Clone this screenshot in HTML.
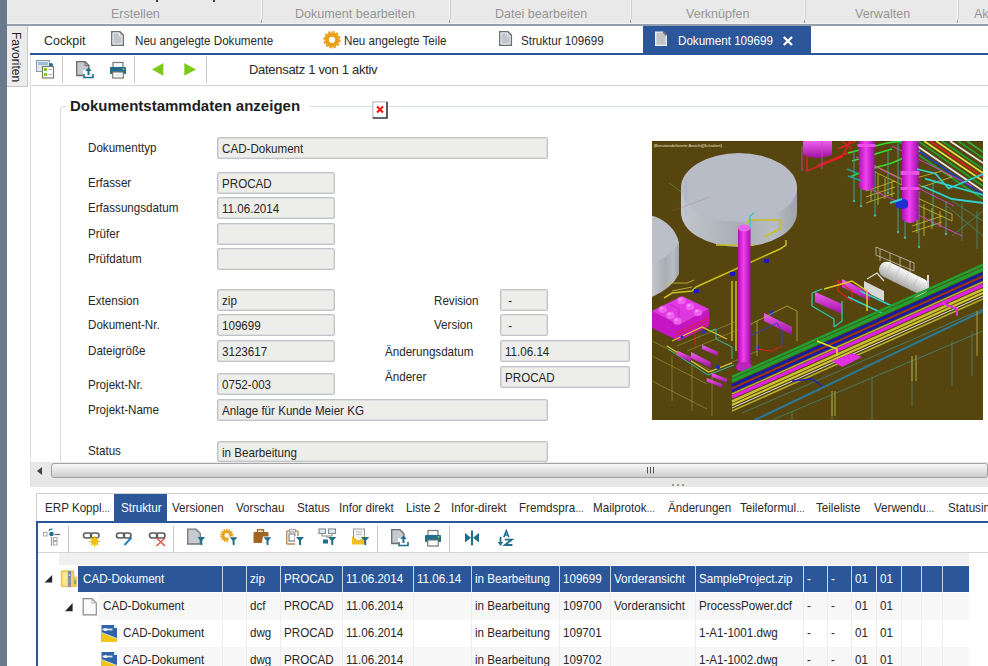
<!DOCTYPE html>
<html><head><meta charset="utf-8">
<style>
*{box-sizing:border-box;margin:0;padding:0}
html,body{width:988px;height:666px;overflow:hidden;background:#fff;font-family:"Liberation Sans",sans-serif;color:#222;position:relative}
.a{position:absolute;white-space:nowrap}
.rib{font-size:13.5px;color:#979593;top:5.6px;transform-origin:0 0;transform:scaleX(.93)}
.rsep{position:absolute;top:0;width:1px;height:19px;background:#cdcdcd;box-shadow:-1px 0 0 #f7f7f7}
.rsep:after{content:"";position:absolute;left:-1px;top:20px;width:1px;height:3px;background:#8fa0c0}
.tab{font-size:13.5px;transform-origin:0 0;transform:scaleX(.86);top:33px;color:#2a2a2a}
.tb{position:absolute;top:0;width:1px;height:27px;background:#c8c8c8}
.lbl{font-size:13.5px;transform-origin:0 0;transform:scaleX(.86);color:#262626;margin-top:-1px}
.fld{position:absolute;height:22px;background:#ededea;border:1px solid #c0c3c8;box-shadow:inset 0 0 0 1px #dcdee0;border-radius:2px;font-size:13.5px;color:#262626;padding:3px 0 0 4px;white-space:nowrap;overflow:hidden}
.btab{font-size:13.5px;transform-origin:0 0;transform:scaleX(.86);top:500px;color:#2a2a2a}
.row{position:absolute;height:26px;font-size:11.5px}
.gt{font-size:13.5px;transform-origin:0 0;transform:scaleX(.86);margin-top:-1px}
.fld span{display:inline-block;transform-origin:0 0;transform:scaleX(.86)}
.cell{position:absolute;top:0;height:26px;padding:6px 0 0 4px;white-space:nowrap;overflow:hidden}
</style></head><body>
<!-- left dark strip -->
<div class="a" style="left:0;top:0;width:7px;height:666px;background:#6b798c"></div>
<!-- ribbon -->
<div class="a" style="left:7px;top:0;width:981px;height:24px;background:#e9e9e9"></div>
<div class="a" style="left:7px;top:23px;width:981px;height:1px;background:#f3f3f3"></div>
<div class="a" style="left:7px;top:24px;width:981px;height:2px;background:#96a0ad"></div>
<div class="a" style="left:156px;top:0;width:2px;height:2px;background:#3a3a55"></div>
<div class="a" style="left:213px;top:0;width:2px;height:2px;background:#3a3a55"></div>
<div class="rsep" style="left:262px"></div>
<div class="rsep" style="left:450px"></div>
<div class="rsep" style="left:631px"></div>
<div class="rsep" style="left:805px"></div>
<div class="rsep" style="left:958px"></div>
<div class="a rib" style="left:111px">Erstellen</div>
<div class="a rib" style="left:295px">Dokument bearbeiten</div>
<div class="a rib" style="left:495px">Datei bearbeiten</div>
<div class="a rib" style="left:686px">Verknüpfen</div>
<div class="a rib" style="left:855px">Verwalten</div>
<div class="a rib" style="left:974px">Ak</div>

<!-- favoriten tab -->
<div class="a" style="left:7px;top:26px;width:21px;height:61px;background:#ececec;border-right:1px solid #c6c6c6;border-bottom:1px solid #c6c6c6"></div>
<div class="a" style="left:9px;top:32px;font-size:13.5px;color:#1e1e1e;transform-origin:0 0;transform:translate(15px,0) rotate(90deg) scale(0.89,1)">Favoriten</div>
<div class="a" style="left:30px;top:55px;width:1px;height:432px;background:#dedede"></div>

<!-- doc tabs -->
<div class="a tab" style="left:44px;transform:scaleX(.92)">Cockpit</div>
<div class="a tab" style="left:135px">Neu angelegte Dokumente</div>
<div class="a tab" style="left:344px">Neu angelegte Teile</div>
<div class="a tab" style="left:521px">Struktur 109699</div>
<div class="a" style="left:643px;top:26px;width:168px;height:28px;background:#2b579a"></div>
<div class="a tab" style="left:678px;color:#fff">Dokument 109699</div>
<svg class="a" style="left:780px;top:33px" width="16" height="16"><path d="M3.8,4 L12,12 M12,4 L3.8,12" stroke="#fff" stroke-width="2.3"/></svg>
<div class="a" style="left:30px;top:53px;width:958px;height:2px;background:#2b579a"></div>

<!-- toolbar -->
<div class="a" style="left:31px;top:85px;width:957px;height:1px;background:#d4d4d4"></div>
<div class="tb" style="left:62px;top:56px"></div>
<div class="tb" style="left:134px;top:56px"></div>
<div class="tb" style="left:206px;top:56px"></div>
<div class="a" style="left:249px;top:62px;font-size:13px;letter-spacing:-0.3px;color:#2a2a2a">Datensatz 1 von 1 aktiv</div>

<!-- group box -->
<div class="a" style="left:60px;top:106px;width:928px;height:356px;border-top:1px solid #d5dde3;border-left:1px solid #d5dde3;border-top-left-radius:4px"></div>
<div class="a" style="left:66px;top:97px;padding:0 4px;background:#fff;font-size:15px;font-weight:bold;color:#1e1e1e">Dokumentstammdaten anzeigen</div>
<div class="a" style="left:300px;top:100px;width:10px;height:12px;background:#fff"></div>

<!-- labels -->
<div class="a lbl" style="left:88px;top:141px">Dokumenttyp</div>
<div class="a lbl" style="left:88px;top:176px">Erfasser</div>
<div class="a lbl" style="left:88px;top:201px">Erfassungsdatum</div>
<div class="a lbl" style="left:88px;top:227px">Prüfer</div>
<div class="a lbl" style="left:88px;top:252px">Prüfdatum</div>
<div class="a lbl" style="left:88px;top:294px">Extension</div>
<div class="a lbl" style="left:88px;top:318px">Dokument-Nr.</div>
<div class="a lbl" style="left:88px;top:344px">Dateigröße</div>
<div class="a lbl" style="left:88px;top:378px">Projekt-Nr.</div>
<div class="a lbl" style="left:88px;top:403px">Projekt-Name</div>
<div class="a lbl" style="left:88px;top:444px">Status</div>
<div class="a lbl" style="left:434px;top:294px">Revision</div>
<div class="a lbl" style="left:434px;top:318px">Version</div>
<div class="a lbl" style="left:385px;top:345px">Änderungsdatum</div>
<div class="a lbl" style="left:385px;top:370px">Änderer</div>

<!-- fields -->
<div class="fld" style="left:217px;top:137px;width:331px"><span>CAD-Dokument</span></div>
<div class="fld" style="left:217px;top:172px;width:118px"><span>PROCAD</span></div>
<div class="fld" style="left:217px;top:197px;width:118px"><span>11.06.2014</span></div>
<div class="fld" style="left:217px;top:223px;width:118px"></div>
<div class="fld" style="left:217px;top:248px;width:118px"></div>
<div class="fld" style="left:217px;top:289px;width:118px"><span>zip</span></div>
<div class="fld" style="left:217px;top:314px;width:118px"><span>109699</span></div>
<div class="fld" style="left:217px;top:340px;width:118px"><span>3123617</span></div>
<div class="fld" style="left:217px;top:373px;width:118px"><span>0752-003</span></div>
<div class="fld" style="left:217px;top:399px;width:331px"><span>Anlage für Kunde Meier KG</span></div>
<div class="fld" style="left:217px;top:441px;width:331px;height:21px"><span>in Bearbeitung</span></div>
<div class="fld" style="left:500px;top:289px;width:48px"><span>&nbsp;-</span></div>
<div class="fld" style="left:500px;top:314px;width:48px"><span>&nbsp;-</span></div>
<div class="fld" style="left:500px;top:340px;width:130px"><span>11.06.14</span></div>
<div class="fld" style="left:500px;top:366px;width:130px"><span>PROCAD</span></div>

<!-- CAD image -->
<div class="a" style="left:652px;top:141px;width:331px;height:279px;background:#57450f;overflow:hidden" id="cad"><svg width="331" height="279" viewBox="0 0 331 279" style="position:absolute;left:0;top:0">
<defs>
<linearGradient id="tside" x1="0" x2="1" y1="0" y2="0"><stop offset="0" stop-color="#c3c6cd"/><stop offset="0.5" stop-color="#a9adb5"/><stop offset="0.8" stop-color="#b8bcc3"/><stop offset="1" stop-color="#9ea2aa"/></linearGradient>
<linearGradient id="col" x1="0" x2="1" y1="0" y2="0"><stop offset="0" stop-color="#b010b0"/><stop offset="0.45" stop-color="#f040f0"/><stop offset="1" stop-color="#a010a8"/></linearGradient>
<linearGradient id="pipeh" x1="0" x2="0" y1="0" y2="1"><stop offset="0" stop-color="#f060f0"/><stop offset="1" stop-color="#a010a0"/></linearGradient>
<linearGradient id="wht" x1="0" x2="0" y1="0" y2="1"><stop offset="0" stop-color="#ffffff"/><stop offset="1" stop-color="#a8a8a8"/></linearGradient>
</defs>
<rect width="331" height="279" fill="#57450f"/>
<rect x="0" y="0" width="331" height="1" fill="#4a3a08"/>
<text x="2" y="5.5" font-family="Liberation Sans" font-size="4" fill="#e8e0c8">[Benutzerdefinierte Ansicht][Schattiert]</text>
<!-- axis -->
<line x1="17" y1="42" x2="50" y2="66" stroke="#5a9a4a" stroke-width="0.6"/>
<line x1="28" y1="62" x2="55" y2="50" stroke="#b06040" stroke-width="0.6"/>
<!-- big tank -->
<path d="M29,46.5 V71.5 A58,34.4 0 0 0 145,71.5 V46.5 Z" fill="url(#tside)"/>
<ellipse cx="87" cy="46.5" rx="58" ry="34.4" fill="#b7bcc6"/>
<line x1="20" y1="70" x2="58" y2="56" stroke="#c07060" stroke-width="0.5" opacity="0.6"/><line x1="34" y1="40" x2="34" y2="75" stroke="#8090d0" stroke-width="0.5" opacity="0.6"/>
<!-- left tank -->
<path d="M0,102 L27,101.6 L27,133 Q20,147 0,156 Z" fill="url(#tside)"/>
<path d="M0,74.6 Q22,82 27,101.6 Q18,116 0,122 Z" fill="#bbbfc8"/>
<!-- yellow pipes left -->
<g fill="none" stroke="#c8c020" stroke-width="1.5">
<path d="M12,157 L20,152 L40,150 L44,146 L128,108 L134,104 L134,99"/>
<path d="M95,83 L97,79 L128,79 L128,88 L112,96"/>
<path d="M64,104 L102,104"/>
<path d="M80,140 L80,200 M84,140 L84,210"/>
</g>
<g fill="#1a1ab8"><rect x="112" y="118" width="5" height="4"/><rect x="78" y="131" width="5" height="4"/><rect x="42" y="148" width="5" height="4"/></g>
<!-- cooler boxes -->
<path d="M0,170 L27,184 L57,168 L57,185 L27,200 L0,187 Z" fill="#c416c4"/>
<path d="M0,170 L30,155 L57,168 L27,184 Z" fill="#e038e0"/>
<path d="M17,163 L27,168 L27,184" fill="none" stroke="#b010b0" stroke-width="0.6"/>
<g fill="#f060f0"><ellipse cx="10.7" cy="168.5" rx="4.2" ry="3.6"/><ellipse cx="18.5" cy="174.4" rx="4.2" ry="3.6"/><ellipse cx="25.4" cy="180.2" rx="4.2" ry="3.6"/><ellipse cx="29.3" cy="159.7" rx="4.2" ry="3.6"/><ellipse cx="38" cy="165.6" rx="4.2" ry="3.6"/><ellipse cx="45.9" cy="171.5" rx="4.2" ry="3.6"/></g>
<g fill="#ff9cff"><circle cx="9.5" cy="167" r="1.3"/><circle cx="17.3" cy="173" r="1.3"/><circle cx="24.2" cy="178.8" r="1.3"/><circle cx="28.1" cy="158.3" r="1.3"/><circle cx="36.8" cy="164.2" r="1.3"/><circle cx="44.7" cy="170" r="1.3"/></g>
<g stroke="#e02020" stroke-width="0.9"><line x1="24" y1="192" x2="58" y2="176"/><line x1="24" y1="195" x2="58" y2="179"/><line x1="26" y1="198" x2="58" y2="182"/><line x1="43" y1="190" x2="43" y2="207"/></g>
<g fill="none" stroke="#d0c040" stroke-width="0.8"><path d="M10,145 L18,142 L35,142 L42,139 M20,150 L40,146"/></g>
<!-- lower left frames -->
<g fill="none" stroke="#a09838" stroke-width="0.6">
<path d="M0,200 L60,230 L60,275 M0,215 L55,243 M20,215 L20,260 M40,225 L40,270 M0,240 L55,268 M25,205 L85,180 M35,210 L95,185 L95,200 M60,230 L110,208"/>
</g>
<g fill="none" stroke="#d8c830" stroke-width="1.2"><path d="M14.6,204.7 L56.6,231 L80,222 M20,200 L50,186 L75,198"/></g>
<g fill="none" stroke="#30c0b0" stroke-width="1"><path d="M16,208 L56,234 L82,224 M58,190 L64,188 L64,198 L80,206 L80,218"/></g>
<g fill="url(#pipeh)">
<path d="M25,209.5 L39,216 L39,221 L25,214.5 Z"/>
<path d="M39,211 L58.6,221 L58.6,227 L39,217 Z"/>
<path d="M50,203.7 L66,211 L66,215.4 L50,208 Z"/>
<path d="M54.7,237 L70.3,243 L70.3,246.7 L54.7,240.7 Z"/>
<path d="M60,232 L75,238 L75,242 L60,236 Z"/>
<path d="M112,172 L140,186 L140,194 L112,180 Z"/>
</g>
<g fill="#2030c0"><circle cx="51.8" cy="191" r="2"/><circle cx="66" cy="226" r="2.2"/><circle cx="30" cy="196" r="1.6"/><rect x="104" y="205" width="4" height="5"/><rect x="118" y="170" width="4" height="4"/></g>
<g fill="none" stroke="#b0b040" stroke-width="0.8"><path d="M95,185 L135,165 L145,170 L145,200 M95,185 L95,220 M105,180 L105,215"/></g>
<g fill="none" stroke="#3040c0" stroke-width="1"><path d="M98,195 L125,182 L130,190 L130,205"/></g>
<g fill="none" stroke="#e02020" stroke-width="1"><path d="M103,208 L120,210 L130,205"/></g>
<!-- magenta column -->
<rect x="86" y="87" width="12.5" height="139" fill="url(#col)"/>
<ellipse cx="92.2" cy="87" rx="6.2" ry="3.5" fill="#f060f0"/>
<path d="M98,87 L98,75 L102,72" fill="none" stroke="#30c0c0" stroke-width="1.3"/>
<ellipse cx="92" cy="226" rx="8" ry="5" fill="#c020c0"/>
<!-- top right area -->
<path d="M151,0 L180,0 L180,14 Q165,20 151,14 Z" fill="url(#pipeh)"/>
<g fill="none" stroke="#e02020" stroke-width="1.5"><path d="M155,14 L155,30 L190,16 L198,0 M165,25 L200,10"/></g>
<g fill="none" stroke="#d040d0" stroke-width="0.8"><path d="M150,5 L150,30 M170,0 L170,28"/></g>
<!-- diagonal pipes top right -->
<g fill="none" stroke-width="1.8">
<path d="M246,0 L331,58" stroke="#20a030"/>
<path d="M252,0 L331,54" stroke="#2040c0"/>
<path d="M258,0 L331,50" stroke="#e8e8e8"/>
<path d="M266,0 L331,45" stroke="#20a030"/>
<path d="M272,0 L331,40" stroke="#e0e040"/>
<path d="M278,0 L331,36" stroke="#e02020"/>
<path d="M284,0 L331,32" stroke="#e0e040"/>
<path d="M290,0 L331,28" stroke="#20a030"/>
<path d="M298,0 L331,22" stroke="#e8e8e8"/>
<path d="M306,0 L331,17" stroke="#20a030"/>
<path d="M315,0 L331,11" stroke="#30b040"/>
</g>
<g fill="none" stroke="#30e030" stroke-width="1.6"><path d="M196,12 L235,2 L250,0 M200,20 L240,8 M198,36 L212,30 L240,22 L268,10"/></g>
<g fill="none" stroke="#e02020" stroke-width="1.4"><path d="M190,0 L200,8 M186,8 L204,0"/></g>
<!-- yellow ladders -->
<g fill="none" stroke="#c8c030" stroke-width="0.8">
<path d="M217,22 L250,38 L250,44 L217,28 Z M219,30 L219,60 M226,33 L226,64 M233,37 L233,58 M240,40 L240,56 M214,50 L243,40 M214,56 L243,46 M214,62 L243,52"/>
<path d="M261,55 L300,73 L300,80 L261,62 Z M265,60 L265,92 M272,63 L272,95 M280,67 L280,88 M288,70 L288,86 M260,85 L290,75 M260,91 L290,81"/>
<path d="M260,38 L290,30 L300,36 L270,46 Z"/>
</g>
<g fill="none" stroke="#d040d0" stroke-width="1"><path d="M204,16 L302,65 M214,46 L244,60 M262,72 L310,95 M240,5 L320,45"/></g>
<!-- teal posts -->
<g stroke="#40a898" stroke-width="0.9">
<line x1="202" y1="10" x2="202" y2="60"/><line x1="209" y1="20" x2="209" y2="65"/><line x1="223" y1="30" x2="223" y2="74.5"/>
<line x1="236" y1="10" x2="236" y2="52"/><line x1="246" y1="0" x2="246" y2="91"/><line x1="253" y1="40" x2="253" y2="96.6"/>
<line x1="267" y1="50" x2="267" y2="106"/><line x1="281" y1="40" x2="281" y2="83.5"/><line x1="294" y1="60" x2="294" y2="93"/>
</g>
<g fill="#40b8a8"><circle cx="202" cy="60" r="1.2"/><circle cx="209" cy="65" r="1.2"/><circle cx="223" cy="74.5" r="1.2"/><circle cx="236" cy="52" r="1.2"/><circle cx="246" cy="91" r="1.2"/><circle cx="253" cy="96.6" r="1.2"/><circle cx="267" cy="106" r="1.2"/><circle cx="281" cy="83.5" r="1.2"/><circle cx="294" cy="93" r="1.2"/></g>
<!-- magenta columns top right -->
<path d="M206.8,0 H222.4 V46 Q214.6,53 206.8,46 Z" fill="url(#col)"/>
<path d="M250,0 H266.5 V78 Q258.2,86 250,78 Z" fill="url(#col)"/>
<g fill="#e850e8"><rect x="205.5" y="3" width="18" height="3"/><rect x="248.5" y="30" width="19" height="4"/><rect x="248.5" y="46" width="19" height="3"/></g>
<path d="M244,60 Q250,55 256,60 L256,66 Q250,70 244,66 Z" fill="#2030d0"/>
<path d="M238,62 L250,58" stroke="#30d0d0" stroke-width="2"/>
<!-- cyan pipes -->
<g fill="none" stroke="#30d0d0" stroke-width="1.8"><path d="M265,28 L283.5,32.7 L296.6,47.5 L331,33 M273,37.6 L331,54 M270,45 L300,58 L331,62"/></g>
<g fill="none" stroke="#2a9a9a" stroke-width="1.6"><path d="M195,28 L205,32 M196,35 L210,40"/></g>
<!-- posts right side -->
<g stroke="#40988a" stroke-width="0.7" fill="none"><path d="M300,60 L331,80 M300,95 L331,70 M310,62 L310,100 M325,70 L325,108 M295,65 L331,95"/></g>
<!-- white equipment -->
<g fill="none" stroke="#d0d0d0" stroke-width="0.7"><path d="M224,106 L262,122 L262,130 L224,114 Z M228,108 L228,120 M238,112 L238,124 M248,116 L248,128 M258,120 L258,132"/></g>
<g transform="translate(252,137) rotate(26)"><rect x="-27" y="-8" width="54" height="16" rx="8" fill="url(#wht)"/><g stroke="#bbb" stroke-width="0.6"><line x1="-18" y1="-8" x2="-18" y2="8"/><line x1="-8" y1="-8" x2="-8" y2="8"/><line x1="2" y1="-8" x2="2" y2="8"/><line x1="12" y1="-8" x2="12" y2="8"/></g></g>
<path d="M212,140 L232,150 L232,160 L212,150 Z" fill="#d8d8d8"/>
<path d="M215,138 L225,132 L232,140" fill="none" stroke="#e0e0e0" stroke-width="1.2"/>
<path d="M262,158 L276,148 L276,134" fill="none" stroke="#d8d8d8" stroke-width="2"/>
<!-- red/magenta vessel near equip -->
<path d="M190,138 L218,152 L218,160 L190,146 Z" fill="url(#pipeh)"/>
<g fill="none" stroke="#e02020" stroke-width="1.2"><path d="M186,140 L186,150 L200,160 L200,150 Z"/></g>
<g fill="none" stroke="#30d0d0" stroke-width="1.5"><path d="M196,156 L230,172 M208,150 L240,165"/></g>
<g fill="none" stroke="#e0c820" stroke-width="1.5"><path d="M172,148 L200,140 L215,150 L215,170"/></g>
<!-- vessel left of center -->
<path d="M163,151 L190,163 L190,173 L163,161 Z" fill="url(#pipeh)"/>
<g fill="none" stroke="#30c8b0" stroke-width="1.3"><path d="M160,152 L160,165 L182,178 L182,186 M190,160 L190,180 L182,186 M160,152 L170,148"/></g>
<!-- pipe rack -->
<g fill="none" stroke-linecap="butt">
<path d="M80,236 L331,124" stroke="#20a030" stroke-width="2.5"/>
<path d="M80,240 L331,128" stroke="#20a030" stroke-width="3.5"/>
<path d="M80,244.5 L331,132.5" stroke="#1818b0" stroke-width="2.5"/>
<path d="M80,247.5 L331,135.5" stroke="#e02020" stroke-width="1"/>
<path d="M80,250 L331,138" stroke="#1818b0" stroke-width="2.5"/>
<path d="M80,253 L331,141" stroke="#b0b030" stroke-width="1.5"/>
<path d="M80,256 L331,144" stroke="#e020e0" stroke-width="3.5"/>
<path d="M80,260.5 L331,148.5" stroke="#c8c030" stroke-width="2.5"/>
<path d="M80,264 L331,152" stroke="#d0c838" stroke-width="2"/>
<path d="M80,267 L331,155" stroke="#e0e0e0" stroke-width="1"/>
<path d="M80,270 L331,158" stroke="#b8b030" stroke-width="1.5"/>
</g>
<!-- lower railing -->
<g fill="none" stroke="#2a7a9a" stroke-width="2"><path d="M80,290 L331,170"/></g>
<g fill="none" stroke="#40908a" stroke-width="0.7"><path d="M90,272 L331,168 M120,279 L331,190 M140,270 L140,279 M180,255 L180,279 M220,236 L220,279 M260,218 L260,265 M300,200 L300,245 M320,190 L320,235"/></g>
<g fill="none" stroke="#b0a838" stroke-width="1"><path d="M180,250 L180,275 M183,250 L183,275 M260,215 L260,240 M264,214 L264,240 M325,170 L325,215"/></g>
<path d="M180,220 L200,212 L210,216 L190,226 Z" fill="#e030e0"/>
<path d="M290,162 L305,168 L305,175" fill="none" stroke="#e030e0" stroke-width="2"/>
<path d="M140,240 L160,238 L170,245" fill="none" stroke="#2020c0" stroke-width="1.5"/>
<path d="M165,200 L185,208 L185,215" fill="none" stroke="#e0e030" stroke-width="1.5"/>
</svg>
</div>

<!-- h scrollbar -->
<div class="a" style="left:31px;top:462px;width:957px;height:16px;background:#e8e8e8"></div>
<div class="a" style="left:51px;top:463px;width:937px;height:15px;border:1px solid #a3a3a3;border-radius:3px;background:linear-gradient(#f6f6f6,#e6e6e6 45%,#cdcdcd)"></div>
<div class="a" style="left:37px;top:467px;width:0;height:0;border-top:4px solid transparent;border-bottom:4px solid transparent;border-right:5px solid #444"></div>
<div class="a" style="left:31px;top:478px;width:957px;height:9px;background:#e6e6e6"></div>

<!-- bottom panel -->
<div class="a" style="left:36px;top:493px;width:952px;height:1px;background:#d0d0d0"></div>
<div class="a" style="left:36px;top:493px;width:1px;height:30px;background:#d0d0d0"></div>
<div class="a" style="left:114px;top:494px;width:53px;height:28px;background:#2b579a"></div>
<div class="a btab" style="left:45px">ERP Koppl<span style="font-size:10px;letter-spacing:-0.6px">…</span></div>
<div class="a btab" style="left:121px;color:#fff">Struktur</div>
<div class="a btab" style="left:172px">Versionen</div>
<div class="a btab" style="left:236px">Vorschau</div>
<div class="a btab" style="left:297px">Status</div>
<div class="a btab" style="left:339px">Infor direkt</div>
<div class="a btab" style="left:406px">Liste 2</div>
<div class="a btab" style="left:451px">Infor-direkt</div>
<div class="a btab" style="left:519px">Fremdspra<span style="font-size:10px;letter-spacing:-0.6px">…</span></div>
<div class="a btab" style="left:593px">Mailprotok<span style="font-size:10px;letter-spacing:-0.6px">…</span></div>
<div class="a btab" style="left:668px">Änderungen</div>
<div class="a btab" style="left:740px">Teileformul<span style="font-size:10px;letter-spacing:-0.6px">…</span></div>
<div class="a btab" style="left:816px">Teileliste</div>
<div class="a btab" style="left:874px">Verwendu<span style="font-size:10px;letter-spacing:-0.6px">…</span></div>
<div class="a btab" style="left:948px">Statusinfo</div>
<div class="a" style="left:36px;top:521px;width:952px;height:2px;background:#2b579a"></div>
<div class="a" style="left:36px;top:521px;width:2px;height:145px;background:#2b579a"></div>

<!-- toolbar 2 -->
<div class="a" style="left:38px;top:552px;width:950px;height:1px;background:#d4d4d4"></div>
<div class="tb" style="left:68px;top:526px"></div>
<div class="tb" style="left:173px;top:526px"></div>
<div class="tb" style="left:377px;top:526px"></div>
<div class="tb" style="left:449px;top:526px"></div>

<!-- grid -->
<div class="a" style="left:59px;top:553px;width:910px;height:12px;background:#f0f0f0"></div>
<div id="grid">
<div class="a" style="left:78px;top:566px;width:891px;height:26px;background:#2b579a"></div>
<div class="a" style="left:222px;top:566px;width:1px;height:26px;background:#c9d5e8"></div>
<div class="a" style="left:246px;top:566px;width:1px;height:26px;background:#c9d5e8"></div>
<div class="a" style="left:280px;top:566px;width:1px;height:26px;background:#c9d5e8"></div>
<div class="a" style="left:342px;top:566px;width:1px;height:26px;background:#c9d5e8"></div>
<div class="a" style="left:413px;top:566px;width:1px;height:26px;background:#c9d5e8"></div>
<div class="a" style="left:471px;top:566px;width:1px;height:26px;background:#c9d5e8"></div>
<div class="a" style="left:559px;top:566px;width:1px;height:26px;background:#c9d5e8"></div>
<div class="a" style="left:610px;top:566px;width:1px;height:26px;background:#c9d5e8"></div>
<div class="a" style="left:695px;top:566px;width:1px;height:26px;background:#c9d5e8"></div>
<div class="a" style="left:803px;top:566px;width:1px;height:26px;background:#c9d5e8"></div>
<div class="a" style="left:827px;top:566px;width:1px;height:26px;background:#c9d5e8"></div>
<div class="a" style="left:851px;top:566px;width:1px;height:26px;background:#c9d5e8"></div>
<div class="a" style="left:876px;top:566px;width:1px;height:26px;background:#c9d5e8"></div>
<div class="a" style="left:901px;top:566px;width:1px;height:26px;background:#c9d5e8"></div>
<div class="a" style="left:921px;top:566px;width:1px;height:26px;background:#c9d5e8"></div>
<div class="a" style="left:942px;top:566px;width:1px;height:26px;background:#c9d5e8"></div>
<div class="a gt" style="left:83px;top:572px;color:#fff">CAD-Dokument</div>
<div class="a gt" style="left:250px;top:572px;color:#fff">zip</div>
<div class="a gt" style="left:284px;top:572px;color:#fff">PROCAD</div>
<div class="a gt" style="left:346px;top:572px;color:#fff">11.06.2014</div>
<div class="a gt" style="left:417px;top:572px;color:#fff">11.06.14</div>
<div class="a gt" style="left:475px;top:572px;color:#fff">in Bearbeitung</div>
<div class="a gt" style="left:563px;top:572px;color:#fff">109699</div>
<div class="a gt" style="left:614px;top:572px;color:#fff">Vorderansicht</div>
<div class="a gt" style="left:699px;top:572px;color:#fff">SampleProject.zip</div>
<div class="a gt" style="left:807px;top:572px;color:#fff">-</div>
<div class="a gt" style="left:831px;top:572px;color:#fff">-</div>
<div class="a gt" style="left:855px;top:572px;color:#fff">01</div>
<div class="a gt" style="left:880px;top:572px;color:#fff">01</div>
<div class="a" style="left:98px;top:593px;width:871px;height:27px;background:#f7f7f7"></div>
<div class="a" style="left:222px;top:593px;width:1px;height:27px;background:#ededed"></div>
<div class="a" style="left:246px;top:593px;width:1px;height:27px;background:#ededed"></div>
<div class="a" style="left:280px;top:593px;width:1px;height:27px;background:#ededed"></div>
<div class="a" style="left:342px;top:593px;width:1px;height:27px;background:#ededed"></div>
<div class="a" style="left:413px;top:593px;width:1px;height:27px;background:#ededed"></div>
<div class="a" style="left:471px;top:593px;width:1px;height:27px;background:#ededed"></div>
<div class="a" style="left:559px;top:593px;width:1px;height:27px;background:#ededed"></div>
<div class="a" style="left:610px;top:593px;width:1px;height:27px;background:#ededed"></div>
<div class="a" style="left:695px;top:593px;width:1px;height:27px;background:#ededed"></div>
<div class="a" style="left:803px;top:593px;width:1px;height:27px;background:#ededed"></div>
<div class="a" style="left:827px;top:593px;width:1px;height:27px;background:#ededed"></div>
<div class="a" style="left:851px;top:593px;width:1px;height:27px;background:#ededed"></div>
<div class="a" style="left:876px;top:593px;width:1px;height:27px;background:#ededed"></div>
<div class="a" style="left:901px;top:593px;width:1px;height:27px;background:#ededed"></div>
<div class="a" style="left:921px;top:593px;width:1px;height:27px;background:#ededed"></div>
<div class="a" style="left:942px;top:593px;width:1px;height:27px;background:#ededed"></div>
<div class="a gt" style="left:103px;top:599px;color:#262626">CAD-Dokument</div>
<div class="a gt" style="left:250px;top:599px;color:#262626">dcf</div>
<div class="a gt" style="left:284px;top:599px;color:#262626">PROCAD</div>
<div class="a gt" style="left:346px;top:599px;color:#262626">11.06.2014</div>
<div class="a gt" style="left:475px;top:599px;color:#262626">in Bearbeitung</div>
<div class="a gt" style="left:563px;top:599px;color:#262626">109700</div>
<div class="a gt" style="left:614px;top:599px;color:#262626">Vorderansicht</div>
<div class="a gt" style="left:699px;top:599px;color:#262626">ProcessPower.dcf</div>
<div class="a gt" style="left:807px;top:599px;color:#262626">-</div>
<div class="a gt" style="left:831px;top:599px;color:#262626">-</div>
<div class="a gt" style="left:855px;top:599px;color:#262626">01</div>
<div class="a gt" style="left:880px;top:599px;color:#262626">01</div>
<div class="a" style="left:222px;top:620px;width:1px;height:27px;background:#ededed"></div>
<div class="a" style="left:246px;top:620px;width:1px;height:27px;background:#ededed"></div>
<div class="a" style="left:280px;top:620px;width:1px;height:27px;background:#ededed"></div>
<div class="a" style="left:342px;top:620px;width:1px;height:27px;background:#ededed"></div>
<div class="a" style="left:413px;top:620px;width:1px;height:27px;background:#ededed"></div>
<div class="a" style="left:471px;top:620px;width:1px;height:27px;background:#ededed"></div>
<div class="a" style="left:559px;top:620px;width:1px;height:27px;background:#ededed"></div>
<div class="a" style="left:610px;top:620px;width:1px;height:27px;background:#ededed"></div>
<div class="a" style="left:695px;top:620px;width:1px;height:27px;background:#ededed"></div>
<div class="a" style="left:803px;top:620px;width:1px;height:27px;background:#ededed"></div>
<div class="a" style="left:827px;top:620px;width:1px;height:27px;background:#ededed"></div>
<div class="a" style="left:851px;top:620px;width:1px;height:27px;background:#ededed"></div>
<div class="a" style="left:876px;top:620px;width:1px;height:27px;background:#ededed"></div>
<div class="a" style="left:901px;top:620px;width:1px;height:27px;background:#ededed"></div>
<div class="a" style="left:921px;top:620px;width:1px;height:27px;background:#ededed"></div>
<div class="a" style="left:942px;top:620px;width:1px;height:27px;background:#ededed"></div>
<div class="a gt" style="left:123px;top:626px;color:#262626">CAD-Dokument</div>
<div class="a gt" style="left:250px;top:626px;color:#262626">dwg</div>
<div class="a gt" style="left:284px;top:626px;color:#262626">PROCAD</div>
<div class="a gt" style="left:346px;top:626px;color:#262626">11.06.2014</div>
<div class="a gt" style="left:475px;top:626px;color:#262626">in Bearbeitung</div>
<div class="a gt" style="left:563px;top:626px;color:#262626">109701</div>
<div class="a gt" style="left:699px;top:626px;color:#262626">1-A1-1001.dwg</div>
<div class="a gt" style="left:807px;top:626px;color:#262626">-</div>
<div class="a gt" style="left:831px;top:626px;color:#262626">-</div>
<div class="a gt" style="left:855px;top:626px;color:#262626">01</div>
<div class="a gt" style="left:880px;top:626px;color:#262626">01</div>
<div class="a" style="left:118px;top:647px;width:851px;height:27px;background:#f7f7f7"></div>
<div class="a" style="left:222px;top:647px;width:1px;height:27px;background:#ededed"></div>
<div class="a" style="left:246px;top:647px;width:1px;height:27px;background:#ededed"></div>
<div class="a" style="left:280px;top:647px;width:1px;height:27px;background:#ededed"></div>
<div class="a" style="left:342px;top:647px;width:1px;height:27px;background:#ededed"></div>
<div class="a" style="left:413px;top:647px;width:1px;height:27px;background:#ededed"></div>
<div class="a" style="left:471px;top:647px;width:1px;height:27px;background:#ededed"></div>
<div class="a" style="left:559px;top:647px;width:1px;height:27px;background:#ededed"></div>
<div class="a" style="left:610px;top:647px;width:1px;height:27px;background:#ededed"></div>
<div class="a" style="left:695px;top:647px;width:1px;height:27px;background:#ededed"></div>
<div class="a" style="left:803px;top:647px;width:1px;height:27px;background:#ededed"></div>
<div class="a" style="left:827px;top:647px;width:1px;height:27px;background:#ededed"></div>
<div class="a" style="left:851px;top:647px;width:1px;height:27px;background:#ededed"></div>
<div class="a" style="left:876px;top:647px;width:1px;height:27px;background:#ededed"></div>
<div class="a" style="left:901px;top:647px;width:1px;height:27px;background:#ededed"></div>
<div class="a" style="left:921px;top:647px;width:1px;height:27px;background:#ededed"></div>
<div class="a" style="left:942px;top:647px;width:1px;height:27px;background:#ededed"></div>
<div class="a gt" style="left:123px;top:653px;color:#262626">CAD-Dokument</div>
<div class="a gt" style="left:250px;top:653px;color:#262626">dwg</div>
<div class="a gt" style="left:284px;top:653px;color:#262626">PROCAD</div>
<div class="a gt" style="left:346px;top:653px;color:#262626">11.06.2014</div>
<div class="a gt" style="left:475px;top:653px;color:#262626">in Bearbeitung</div>
<div class="a gt" style="left:563px;top:653px;color:#262626">109702</div>
<div class="a gt" style="left:699px;top:653px;color:#262626">1-A1-1002.dwg</div>
<div class="a gt" style="left:807px;top:653px;color:#262626">-</div>
<div class="a gt" style="left:831px;top:653px;color:#262626">-</div>
<div class="a gt" style="left:855px;top:653px;color:#262626">01</div>
<div class="a gt" style="left:880px;top:653px;color:#262626">01</div>

</div>
<!-- ICONS -->
<svg class="a" style="left:0;top:0" width="988" height="666" viewBox="0 0 988 666">
<!-- toolbar1: form icon -->
<rect x="36.5" y="60.5" width="13" height="11" fill="#dfe8f0" stroke="#8a9aa8"/>
<rect x="38" y="62" width="10" height="3" fill="#9bbfd8"/>
<circle cx="51" cy="65" r="2" fill="#1f6e8c"/>
<rect x="42.5" y="66.5" width="11" height="11.5" fill="#fff" stroke="#7a7a7a" stroke-width="1.2"/>
<rect x="44" y="68" width="3" height="3" fill="#7dc919"/>
<rect x="44" y="73" width="3" height="3" fill="#7dc919"/>
<line x1="48.5" y1="69.5" x2="52" y2="69.5" stroke="#aaa"/>
<line x1="48.5" y1="74.5" x2="52" y2="74.5" stroke="#aaa"/>
<!-- doc upload -->
<path d="M76.7,61.6 H85 L89,65.6 V75.5 H76.7 Z" fill="#c5cbd0" stroke="#6a6a6a" stroke-width="1.3"/>
<path d="M85,61.6 V65.6 H89" fill="none" stroke="#6a6a6a" stroke-width="1"/>
<rect x="83" y="70" width="11" height="8.5" fill="#fff"/>
<path d="M88.5,67.5 L85.3,71 H87.5 V75 H89.5 V71 H91.7 Z" fill="#1f6e8c"/>
<path d="M84,74 V77.5 H93 V74" fill="none" stroke="#1f6e8c" stroke-width="1.6"/>
<!-- printer -->
<rect x="113" y="62.5" width="10" height="5" fill="#fff" stroke="#777" stroke-width="1.2"/>
<rect x="110" y="67" width="16" height="7" rx="1" fill="#1f6e8c"/>
<circle cx="123.5" cy="69" r="0.9" fill="#9fd05a"/>
<rect x="112.7" y="72" width="10.6" height="6" fill="#fff" stroke="#777" stroke-width="1.2"/>
<line x1="114.5" y1="75" x2="121.5" y2="75" stroke="#ccc" stroke-width="0.8"/>
<!-- green arrows -->
<path d="M152,69.4 L163.4,63.1 V75.7 Z" fill="#7dc919"/>
<path d="M196,69.4 L184.3,63.1 V75.7 Z" fill="#7dc919"/>
<!-- tab doc icons -->
<path d="M111.7,31.7 H120 L123.4,35 V45.3 H111.7 Z" fill="#c0c6cb" stroke="#6e6e6e" stroke-width="1.3"/>
<path d="M113,33 H119.5 V36 H122 V44 H113 Z" fill="none" stroke="#e8ecef" stroke-width="1"/>
<path d="M499.7,31.7 H508 L511.4,35 V45.3 H499.7 Z" fill="#c0c6cb" stroke="#6e6e6e" stroke-width="1.3"/>
<path d="M501,33 H507.5 V36 H510 V44 H501 Z" fill="none" stroke="#e8ecef" stroke-width="1"/>
<path d="M655.7,32.2 H663 L666.3,35.5 V45.3 H655.7 Z" fill="#bfc4c9" stroke="#f2f2f2" stroke-width="1.3"/>
<path d="M663,32.2 L666.3,35.5" fill="none" stroke="#7a6a5a" stroke-width="1.3"/>
<!-- gear -->
<g transform="translate(332,39.8)">
<circle r="7.4" fill="#e8a11b"/>
<circle r="8" fill="none" stroke="#e8a11b" stroke-width="1.5" stroke-dasharray="2.5 1.69"/>
<circle r="3.1" fill="#fff"/>
</g>
<!-- red x box -->
<rect x="372.5" y="101.5" width="15" height="17" fill="#fff"/>
<path d="M372.8,118 V101.8 H387" fill="none" stroke="#c2c2d0" stroke-width="1.3"/>
<path d="M387,101.8 V118 H372.8" fill="none" stroke="#333" stroke-width="1.6"/>
<path d="M377,106.5 L383,112.5 M383,106.5 L377,112.5" stroke="#ff1010" stroke-width="2"/>
</svg>

<svg class="a" style="left:0;top:0" width="988" height="666" viewBox="0 0 988 666">
<!-- tree icon -->
<rect x="43.5" y="532.5" width="3.5" height="3.5" fill="none" stroke="#aaa"/>
<path d="M49,531 Q50,528.5 52.5,529.5" fill="none" stroke="#1f6e8c" stroke-width="1.2"/>
<circle cx="51.5" cy="534" r="2.3" fill="#1f6e8c"/>
<line x1="54.5" y1="534.5" x2="60" y2="534.5" stroke="#666" stroke-width="1.2"/>
<line x1="51.5" y1="537" x2="51.5" y2="546" stroke="#999" stroke-width="1.3"/>
<rect x="53.5" y="537.5" width="3.5" height="3" fill="none" stroke="#aaa"/>
<rect x="53.5" y="541.5" width="3.5" height="3.5" fill="none" stroke="#aaa"/>
<!-- link sun -->
<g fill="none" stroke="#5a5a5a" stroke-width="1.5">
<rect x="83.5" y="533" width="8" height="5" rx="2.5"/><rect x="90.5" y="533" width="8.5" height="5" rx="2.5"/>
<rect x="116.5" y="533" width="8" height="5" rx="2.5"/><rect x="123.5" y="533" width="7.5" height="5" rx="2.5"/>
<rect x="149.5" y="533" width="8" height="5" rx="2.5"/><rect x="156.5" y="533" width="8.5" height="5" rx="2.5"/>
</g>
<circle cx="94.6" cy="541.5" r="3.6" fill="#f2c012"/>
<g stroke="#f2c012" stroke-width="1.2"><line x1="94.6" y1="536" x2="94.6" y2="547"/><line x1="89" y1="541.5" x2="100" y2="541.5"/><line x1="90.8" y1="537.7" x2="98.4" y2="545.3"/><line x1="98.4" y1="537.7" x2="90.8" y2="545.3"/></g>
<line x1="124.5" y1="545" x2="131.5" y2="537.5" stroke="#2a7fb5" stroke-width="2"/>
<path d="M156.5,538 L165,546 M165,538 L156.5,546" stroke="#e05a48" stroke-width="1.6"/>
<!-- doc filter -->
<path d="M187.7,529.2 H196 L200.3,533.5 V544 H187.7 Z" fill="#c5cbd0" stroke="#777" stroke-width="1.3"/>
<path d="M197.5,537 H205 L202.3,540.5 V545.5 L200.3,544.5 V540.5 Z" fill="#1f6e8c"/>
<!-- gear filter -->
<g transform="translate(226.8,535.4)">
<circle r="5.4" fill="#e8a11b"/>
<circle r="6" fill="none" stroke="#e8a11b" stroke-width="1.6" stroke-dasharray="1.5 1.19"/>
<circle r="2.4" fill="#fff"/>
</g>
<path d="M228.5,536.5 L239,536.5 L236,547 L228.5,547 Z" fill="#fff"/>
<path d="M229.6,537.2 H237.4 L234.6,540.6 V545.4 L232.6,544.6 V540.6 Z" fill="#1f6e8c"/>
<!-- briefcase filter -->
<rect x="257.5" y="529.8" width="6" height="3" fill="none" stroke="#a0641e" stroke-width="1.4"/>
<rect x="253.5" y="532" width="15" height="11" rx="1" fill="#a0641e"/>
<path d="M263,536.5 L272,536.5 L270,547 L261,547 Z" fill="#fff"/>
<path d="M263.5,537.2 H271.3 L268.5,540.6 V545.4 L266.5,544.6 V540.6 Z" fill="#1f6e8c"/>
<!-- clipboard filter -->
<rect x="286.7" y="531" width="11.3" height="13" rx="1" fill="#fff" stroke="#b08d5a" stroke-width="1.4"/>
<rect x="289.5" y="529.2" width="6" height="3" fill="#ddd" stroke="#999" stroke-width="0.8"/>
<rect x="289" y="534" width="6" height="7" fill="none" stroke="#777" stroke-width="1.1"/>
<rect x="295" y="536" width="10" height="10" fill="#fff"/>
<path d="M296,537 H304 L301,540.5 V545.5 L299,544.5 V540.5 Z" fill="#1f6e8c"/>
<!-- hierarchy filter -->
<rect x="319" y="529" width="6.5" height="4.5" fill="#d9ecf5" stroke="#888" stroke-width="1.1"/>
<rect x="328.5" y="529" width="7" height="4.5" fill="#d9ecf5" stroke="#888" stroke-width="1.1"/>
<path d="M322,533.5 V536 H332 V533.5 M327,536 V538" fill="none" stroke="#888" stroke-width="1"/>
<rect x="323" y="539.5" width="5" height="4" fill="#1f6e8c"/>
<path d="M328,537 H336.3 L333.2,540.5 V545.5 L331.2,544.5 V540.5 Z" fill="#1f6e8c"/>
<!-- letter filter -->
<rect x="353.5" y="529" width="11" height="12" fill="#f3f3f3" stroke="#999" stroke-width="1"/>
<line x1="356" y1="532" x2="362" y2="532" stroke="#bbb"/><line x1="356" y1="534.5" x2="362" y2="534.5" stroke="#bbb"/>
<path d="M352,536 L358.5,541 L365,536 V544.5 H352 Z" fill="#f0c020"/>
<path d="M361,537 H369.2 L366.2,540.5 V545.5 L364.2,544.5 V540.5 Z" fill="#1f6e8c"/>
<!-- doc upload 2 -->
<path d="M391.7,529.7 H400 L404,533.7 V543.5 H391.7 Z" fill="#c5cbd0" stroke="#6a6a6a" stroke-width="1.3"/>
<rect x="398" y="538" width="11" height="9" fill="#fff"/>
<path d="M403.5,535.5 L400.3,539 H402.5 V543 H404.5 V539 H406.7 Z" fill="#1f6e8c"/>
<path d="M399,542 V545.5 H408 V542" fill="none" stroke="#1f6e8c" stroke-width="1.6"/>
<!-- printer 2 -->
<rect x="428" y="530.5" width="10" height="5" fill="#fff" stroke="#777" stroke-width="1.2"/>
<rect x="425" y="535" width="16" height="7" rx="1" fill="#1f6e8c"/>
<circle cx="438.5" cy="537" r="0.9" fill="#9fd05a"/>
<rect x="427.7" y="540" width="10.6" height="6" fill="#fff" stroke="#777" stroke-width="1.2"/>
<!-- split -->
<line x1="472" y1="530.6" x2="472" y2="545.3" stroke="#1f6e8c" stroke-width="2"/>
<path d="M465,533 L471,537.7 L465,542.4 Z M479,533 L473,537.7 L479,542.4 Z" fill="#1f6e8c"/>
<!-- sort az -->
<path d="M503.8,537.2 L506.3,530.8 L508.8,537.2 M504.8,535 H507.8" fill="none" stroke="#1f6e8c" stroke-width="1.6"/>
<path d="M504.8,539.6 H511.8 L505,545 H512.4" fill="none" stroke="#1f6e8c" stroke-width="1.9"/>
<path d="M500.5,536.8 V542.5" stroke="#1f6e8c" stroke-width="1.8"/>
<path d="M497.8,542 L500.5,546 L503.2,542 Z" fill="#1f6e8c"/>
<!-- grid icons -->
<path d="M52.2,574.9 V582.5 H44.6 Z" fill="#262626"/>
<path d="M72.6,603 V611.2 H65 Z" fill="#262626"/>
<path d="M73.5,577 H76 Q76.8,577 76.8,578 V586.5 H73.5 Z" fill="#ecc85a" stroke="#d6b048" stroke-width="0.6"/>
<rect x="61.3" y="570.8" width="12.6" height="16" rx="0.8" fill="#f2d264" stroke="#dcb84e" stroke-width="0.8"/>
<rect x="62.8" y="572.3" width="4.5" height="13" fill="#fbe78c"/>
<rect x="68" y="571" width="3" height="15.8" fill="#8a8f98"/>
<rect x="68.3" y="572" width="2.4" height="5" fill="#6b7fb0"/>
<rect x="68.8" y="574" width="1.2" height="2" fill="#d8e0f0"/>
<rect x="74.2" y="580" width="1.6" height="4" fill="#5aa890"/>
<path d="M83.2,598.6 H92 L96.3,602.9 V614.9 H83.2 Z" fill="#fbfbfb" stroke="#8a8a8a" stroke-width="1.2"/>
<path d="M92,598.6 V602.9 H96.3" fill="none" stroke="#aaa" stroke-width="1"/>
<g id="dwg1" transform="translate(0,0)">
<path d="M101.5,625 H114 L117,628 V642 H101.5 Z" fill="#2f64a8"/>
<path d="M101.5,632.5 L117,638.5 V642 H101.5 Z" fill="#f0c419"/>
<path d="M101.5,632.5 L117,638.5" stroke="#e8eef8" stroke-width="0.8"/>
<rect x="102.5" y="628.6" width="10" height="1.8" fill="#dce6f4"/>
<circle cx="105.5" cy="629.5" r="1.6" fill="#fff"/>
<path d="M114,625 V628 H117 Z" fill="#fff"/>
</g>
<g transform="translate(0,27)">
<path d="M101.5,625 H114 L117,628 V642 H101.5 Z" fill="#2f64a8"/>
<path d="M101.5,632.5 L117,638.5 V642 H101.5 Z" fill="#f0c419"/>
<path d="M101.5,632.5 L117,638.5" stroke="#e8eef8" stroke-width="0.8"/>
<rect x="102.5" y="628.6" width="10" height="1.8" fill="#dce6f4"/>
<circle cx="105.5" cy="629.5" r="1.6" fill="#fff"/>
<path d="M114,625 V628 H117 Z" fill="#fff"/>
</g>
<!-- splitter dots -->
<rect x="672" y="484" width="2" height="2" fill="#9a9a8a"/>
<rect x="677" y="484" width="2" height="2" fill="#9a9a8a"/>
<rect x="682" y="484" width="2" height="2" fill="#9a9a8a"/>
<!-- scrollbar grip -->
<g stroke="#555" stroke-width="1"><line x1="647.5" y1="467" x2="647.5" y2="473.5"/><line x1="650.5" y1="467" x2="650.5" y2="473.5"/><line x1="653.5" y1="467" x2="653.5" y2="473.5"/></g>
</svg>

</body></html>
